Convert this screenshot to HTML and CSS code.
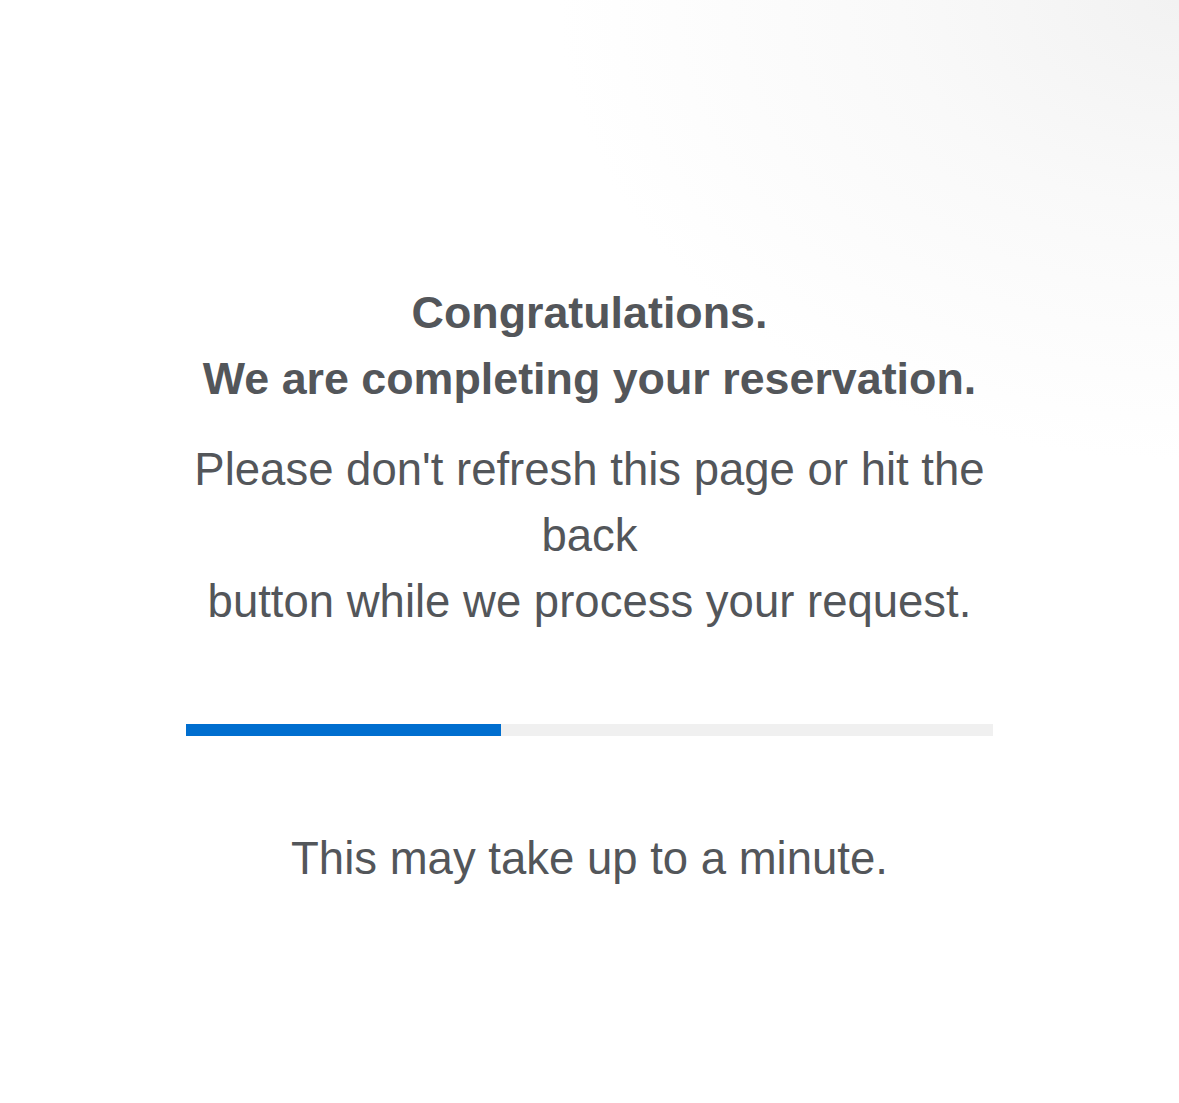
FILE: index.html
```html
<!DOCTYPE html>
<html lang="en">
<head>
<meta charset="utf-8">
<title>Completing reservation</title>
<link rel="stylesheet" href="styles.css">
</head>
<body>
<main class="page">
  <section class="panel">
    <h1 class="title">Congratulations.<br>We are completing your reservation.</h1>
    <p class="message">Please don't refresh this page or hit the back<br>button while we process your request.</p>
    <div class="progress"><div class="progress-fill" style="width: 39%"></div></div>
    <p class="note">This may take up to a minute.</p>
  </section>
</main>
</body>
</html>
```

FILE: styles.css
```css
html, body {
  margin: 0;
  padding: 0;
}
body {
  min-height: 1103px;
  background: radial-gradient(ellipse 620px 460px at 100% 0%, #f2f2f2 0%, #f9f9f9 45%, #ffffff 100%);
  font-family: "Liberation Sans", Arial, Helvetica, sans-serif;
  color: #53565a;
}
.page {
  display: flex;
  justify-content: center;
  padding-top: 279px;
}
.panel {
  width: 807px;
  text-align: center;
}
.title {
  margin: 0;
  font-size: 44.8px;
  line-height: 66px;
  font-weight: 700;
}
.message {
  margin: 26px 0 0;
  font-size: 45.5px;
  line-height: 66px;
  font-weight: 400;
}
.progress {
  margin-top: 89px;
  height: 12px;
  background: #f0f0f0;
}
.progress-fill {
  height: 100%;
  background: #006ecf;
}
.note {
  margin: 90px 0 0;
  font-size: 45.5px;
  line-height: 66px;
}
```
